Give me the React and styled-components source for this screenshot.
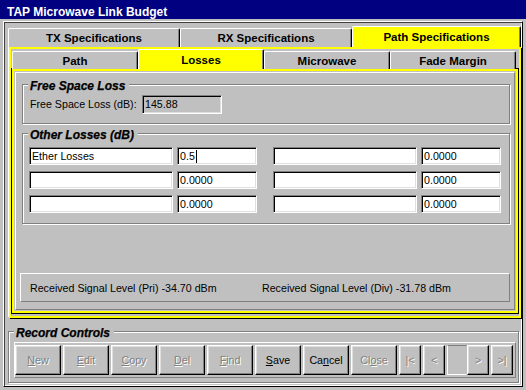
import React from 'react';
import styled, { createGlobalStyle } from 'styled-components';

// Win95-style palette
const FACE = '#c0c0c0';
const SHADOW = '#808080';
const LIGHT = '#dfdfdf';
const YELLOW = '#ffff00';

const GlobalStyle = createGlobalStyle`
  html, body { margin: 0; padding: 0; background: ${FACE}; }
  body {
    font-family: "Liberation Sans", Arial, sans-serif;
    font-size: 8pt;
    color: #000;
  }
  * { box-sizing: border-box; }
`;

const Window = styled.div`
  width: 526px;
  height: 390px;
  background: ${FACE};
  display: flex;
  flex-direction: column;
  overflow: hidden;
`;

const TitleBar = styled.div`
  flex: none;
  height: 19px;
  background: #000080;
  color: #fff;
  font-weight: bold;
  font-size: 12px;
  line-height: 14px;
  padding: 5px 0 0 7px;
  white-space: nowrap;
`;

const Frame = styled.div`
  margin: 2px 3px 0;
  height: 366px;
  border: 1px solid;
  border-color: #fff #000 #000 #fff;
  box-shadow: inset 1px 1px 0 #404040, inset -1px -1px 0 #fff;
  padding: 4px 0 0 4px;
`;

const TabRow = styled.div`
  display: flex;
  align-items: flex-end;
  height: ${p => p.$h}px;
  padding-left: ${p => p.$pad || 0}px;
`;

const Tab = styled.div`
  flex: none;
  width: ${p => p.$w}px;
  height: ${p => (p.$active ? p.$h + 2 : p.$h)}px;
  background: ${p => (p.$active ? YELLOW : FACE)};
  border-top: 1px solid #fff;
  border-left: 1px solid #fff;
  border-right: 1px solid #000;
  border-radius: 2px 2px 0 0;
  box-shadow: inset -1px 0 0 ${SHADOW};
  display: flex;
  align-items: center;
  justify-content: center;
  font-weight: bold;
  font-size: 11.5px;
  white-space: nowrap;
  position: relative;
  z-index: ${p => (p.$active ? 2 : 0)};
`;

const OuterPanel = styled.div`
  margin-left: 1px;
  width: 512px;
  height: 271px;
  border: 2px solid ${YELLOW};
  box-shadow: -1px -1px 0 #fff, 1px 1px 0 #000;
  padding-bottom: 3px;
`;

const InnerPanel = styled.div`
  margin-left: 1px;
  width: 506px;
  height: 244px;
  border: 2px solid ${YELLOW};
  box-shadow: 0 0 0 1px #000;
  padding: 1px;
`;

const Sheet = styled.div`
  height: 100%;
  border: 1px solid;
  border-color: #fff ${SHADOW} ${SHADOW} #fff;
  padding: 11px 4px 7px 6px;
  display: flex;
  flex-direction: column;
`;

const Group = styled.div`
  position: relative;
  flex: none;
  width: ${p => p.$w}px;
  height: ${p => p.$h}px;
  border: 1px solid ${SHADOW};
  box-shadow: inset 1px 1px 0 #fff, 1px 1px 0 #fff;
`;

const Legend = styled.span`
  position: absolute;
  top: -5px;
  left: 5px;
  padding: 0 4px 0 2px;
  background: ${FACE};
  font-size: 12px;
  line-height: 12px;
  font-weight: bold;
  font-style: italic;
  -webkit-text-stroke: 0.25px #000;
  white-space: nowrap;
`;

const FreeSpaceBody = styled.div`
  height: 100%;
  display: flex;
  align-items: center;
  padding-left: 7px;
`;

const Label = styled.span`
  width: 112px;
  white-space: nowrap;
`;

const Field = styled.div`
  flex: none;
  width: ${p => p.$w}px;
  height: ${p => p.$h || 18}px;
  background: ${p => (p.$readOnly ? FACE : '#fff')};
  border: 1px solid;
  border-color: ${SHADOW} #fff #fff ${SHADOW};
  box-shadow: inset 1px 1px 0 #000, inset -1px -1px 0 ${LIGHT};
  padding: 0 2px;
  display: flex;
  align-items: center;
  white-space: nowrap;
  overflow: hidden;
`;

const Caret = styled.span`
  display: inline-block;
  width: 1px;
  height: 13px;
  background: #000;
  margin-left: 1px;
`;

const LossGrid = styled.div`
  padding: 13px 0 0 6px;
  display: flex;
  flex-direction: column;
  gap: 6px;
`;

const LossRow = styled.div`
  display: flex;
  gap: 16px;
`;

const Pair = styled.div`
  display: flex;
  gap: 4px;
`;

const SignalBar = styled.div`
  margin: auto 0 0 -2px;
  width: 490px;
  height: 29px;
  flex: none;
  border: 1px solid;
  border-color: #fff ${SHADOW} ${SHADOW} #fff;
  display: flex;
  align-items: center;
  padding-left: 9px;
  white-space: nowrap;
`;

const SignalText = styled.span`
  width: ${p => p.$w || 'auto'};
`;

const RecordGroup = styled(Group)`
  margin-top: 13px;
  padding: 10px 0 0 5px;
`;

const ButtonBox = styled.div`
  width: 502px;
  height: 36px;
  border: 1px solid;
  border-color: #fff ${SHADOW} ${SHADOW} #fff;
  padding-top: 2px;
  display: flex;
  gap: 2px;
`;

const Button = styled.div`
  flex: none;
  width: ${p => p.$w || 46}px;
  height: 30px;
  background: ${FACE};
  border: 1px solid;
  border-color: #fff #000 #000 #fff;
  box-shadow: inset -1px -1px 0 ${SHADOW}, inset 1px 1px 0 ${LIGHT};
  display: flex;
  align-items: center;
  justify-content: center;
  color: ${p => (p.$disabled ? SHADOW : '#000')};
  text-shadow: ${p => (p.$disabled ? '1px 1px 0 #fff' : 'none')};
  white-space: nowrap;
`;

const Joined = styled.div`
  display: flex;
`;

const PosField = styled.div`
  width: 20px;
  height: 30px;
  border: 1px solid;
  border-color: ${SHADOW} ${FACE} #fff #fff;
`;

const lossRows = [
  [['Ether Losses', '0.5', true], ['', '0.0000']],
  [['', '0.0000'], ['', '0.0000']],
  [['', '0.0000'], ['', '0.0000']],
];

const LossPair = ({ name, value, caret }) => (
  <Pair>
    <Field $w={144}>{name}</Field>
    <Field $w={80}>
      {value}
      {caret && <Caret />}
    </Field>
  </Pair>
);

const records = [
  { pre: '', key: 'N', post: 'ew', off: true },
  { pre: '', key: 'E', post: 'dit', off: true },
  { pre: '', key: 'C', post: 'opy', off: true },
  { pre: '', key: 'D', post: 'el', off: true },
  { pre: '', key: 'F', post: 'ind', off: true },
  { pre: '', key: 'S', post: 'ave', off: false },
  { pre: 'Ca', key: 'n', post: 'cel', off: false },
  { pre: 'Cl', key: 'o', post: 'se', off: true },
];

export default function App() {
  return (
    <>
      <GlobalStyle />
      <Window>
        <TitleBar>TAP Microwave Link Budget</TitleBar>
        <Frame>
          <TabRow $h={21}>
            <Tab $w={172} $h={19}>TX Specifications</Tab>
            <Tab $w={172} $h={19}>RX Specifications</Tab>
            <Tab $w={169} $h={19} $active>Path Specifications</Tab>
          </TabRow>
          <OuterPanel>
            <TabRow $h={20} $pad={1}>
              <Tab $w={126} $h={18}>Path</Tab>
              <Tab $w={126} $h={18} $active>Losses</Tab>
              <Tab $w={126} $h={18}>Microwave</Tab>
              <Tab $w={126} $h={18}>Fade Margin</Tab>
            </TabRow>
            <InnerPanel>
              <Sheet>
                <Group $w={488} $h={40}>
                  <Legend>Free Space Loss</Legend>
                  <FreeSpaceBody>
                    <Label>Free Space Loss (dB):</Label>
                    <Field $w={80} $h={19} $readOnly>145.88</Field>
                  </FreeSpaceBody>
                </Group>
                <Group $w={488} $h={91} style={{ marginTop: 9 }}>
                  <Legend>Other Losses (dB)</Legend>
                  <LossGrid>
                    {lossRows.map((row, i) => (
                      <LossRow key={i}>
                        {row.map(([name, value, caret], j) => (
                          <LossPair key={j} name={name} value={value} caret={caret} />
                        ))}
                      </LossRow>
                    ))}
                  </LossGrid>
                </Group>
                <SignalBar>
                  <SignalText $w="232px">Received Signal Level (Pri) -34.70 dBm</SignalText>
                  <SignalText>Received Signal Level (Div) -31.78 dBm</SignalText>
                </SignalBar>
              </Sheet>
            </InnerPanel>
          </OuterPanel>
          <RecordGroup $w={511} $h={52}>
            <Legend>Record Controls</Legend>
            <ButtonBox>
              {records.map(b => (
                <Button key={b.key + b.post} $disabled={b.off}>
                  {b.pre}
                  <u>{b.key}</u>
                  {b.post}
                </Button>
              ))}
              <Button $w={22} $disabled>|&lt;</Button>
              <Button $w={22} $disabled>&lt;</Button>
              <Joined>
                <PosField />
                <Button $w={22} $disabled>&gt;</Button>
              </Joined>
              <Button $w={22} $disabled>&gt;|</Button>
            </ButtonBox>
          </RecordGroup>
        </Frame>
      </Window>
    </>
  );
}
